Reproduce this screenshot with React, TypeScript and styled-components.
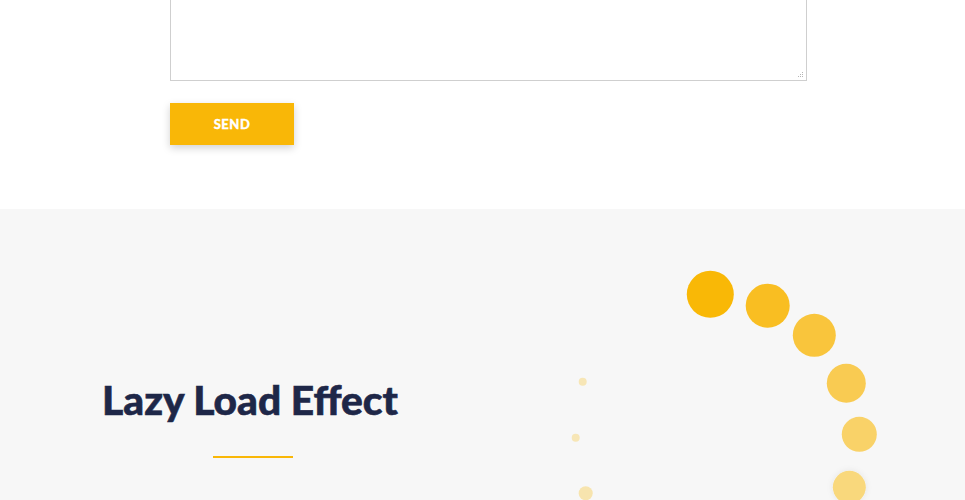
import React from "react";
import styled, { createGlobalStyle } from "styled-components";

const Global = createGlobalStyle`
  html, body { margin: 0; padding: 0; background: #ffffff; }
  body { font-family: Lato, "Open Sans", sans-serif; overflow: hidden; }
`;

const Page = styled.div`
  width: 965px;
  height: 500px;
  overflow: hidden;
`;

const FormSection = styled.section`
  background: #ffffff;
  height: 209px;
  display: flex;
  flex-direction: column;
  align-items: flex-start;
  padding-left: 170px;
  box-sizing: border-box;
`;

const Field = styled.div`
  position: relative;
  margin-top: -159px;
`;

const Message = styled.textarea`
  display: block;
  width: 637px;
  height: 240px;
  box-sizing: border-box;
  border: 1px solid #cfcfcf;
  background: #ffffff;
  resize: none;
  font-family: Lato, sans-serif;
  font-size: 14px;
  outline: none;
`;

const Grip = styled.svg`
  position: absolute;
  right: 3px;
  bottom: 3px;
  pointer-events: none;
`;

const SendButton = styled.button`
  margin-top: 22px;
  width: 124px;
  height: 42px;
  border: none;
  background: #f9b707;
  color: #ffffff;
  font-family: Lato, sans-serif;
  font-weight: 900;
  font-size: 13px;
  letter-spacing: 0.5px;
  text-transform: uppercase;
  -webkit-text-stroke: 0.3px #ffffff;
  box-shadow: 0 3px 8px rgba(0, 0, 0, 0.18);
  cursor: pointer;
`;

const FeatureSection = styled.section`
  background: #f7f7f7;
  height: 291px;
  display: grid;
  grid-template-columns: 505px 1fr;
`;

const TextColumn = styled.div`
  display: flex;
  flex-direction: column;
  align-items: center;
  padding-top: 167px;
`;

const Title = styled.h2`
  margin: 0 5px 0 0;
  font-family: Lato, sans-serif;
  font-weight: 900;
  font-size: 40.7px;
  line-height: 48px;
  color: #1e2748;
  -webkit-text-stroke: 0.6px #1e2748;
`;

const Rule = styled.div`
  width: 80px;
  height: 2px;
  background: #f9b707;
  margin-top: 32px;
  margin-left: 1px;
`;

const LoaderColumn = styled.div`
  position: relative;
`;

const LoaderArt = styled.svg`
  display: block;
  margin-left: 55px;
  margin-top: 55px;
  overflow: visible;
`;

type Dot = { x: number; y: number; r: number; fill: string; shadow?: boolean };

// spinner dots, placed in page coordinates and shifted by the svg origin
const dots: Dot[] = [
  { x: 710.3, y: 294.3, r: 23.5, fill: "#f9b806" },
  { x: 767.7, y: 305.7, r: 22, fill: "#f9be22" },
  { x: 814.3, y: 335.3, r: 21.5, fill: "#f9c53c" },
  { x: 846.3, y: 383.3, r: 19.5, fill: "#f9cb52" },
  { x: 859.3, y: 434.3, r: 17.5, fill: "#f9d268" },
  { x: 849.3, y: 487.3, r: 16.5, fill: "#f9d87c", shadow: true },
  { x: 585.7, y: 493.3, r: 7, fill: "#f7e4ae" },
  { x: 575.7, y: 437.7, r: 4, fill: "#f7e6b6" },
  { x: 582.7, y: 381.7, r: 4, fill: "#f7e6b6" },
];

const OX = 560;
const OY = 264;

function Loader() {
  return (
    <LoaderArt width="340" height="260" viewBox="0 0 340 260">
      <defs>
        <filter id="soft" x="-50%" y="-50%" width="200%" height="200%">
          <feDropShadow dx="0" dy="0" stdDeviation="3" floodColor="#000" floodOpacity="0.08" />
        </filter>
      </defs>
      {dots.map((d, i) => (
        <circle
          key={i}
          cx={d.x - OX}
          cy={d.y - OY}
          r={d.r}
          fill={d.fill}
          filter={d.shadow ? "url(#soft)" : undefined}
        />
      ))}
    </LoaderArt>
  );
}

// dotted resize handle in the textarea corner
function ResizeGrip() {
  const pts = [
    [5, 1],
    [3, 3], [5, 3],
    [1, 5], [3, 5], [5, 5],
  ];
  return (
    <Grip width="7" height="7" viewBox="0 0 7 7">
      {pts.map(([x, y], i) => (
        <rect key={i} x={x} y={y} width="1" height="1" fill="#b5b5b5" />
      ))}
    </Grip>
  );
}

export default function App() {
  return (
    <Page>
      <Global />
      <FormSection>
        <Field>
          <Message />
          <ResizeGrip />
        </Field>
        <SendButton>Send</SendButton>
      </FormSection>
      <FeatureSection>
        <TextColumn>
          <Title>Lazy Load Effect</Title>
          <Rule />
        </TextColumn>
        <LoaderColumn>
          <Loader />
        </LoaderColumn>
      </FeatureSection>
    </Page>
  );
}
